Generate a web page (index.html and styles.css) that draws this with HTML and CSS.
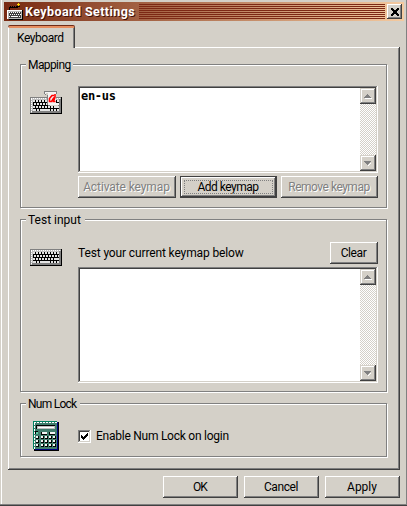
FILE: index.html
```html
<!DOCTYPE html>
<html lang="en">
<head>
<meta charset="utf-8">
<title>Keyboard Settings</title>
<link rel="stylesheet" href="styles.css">
</head>
<body>
<svg class="defs" width="0" height="0" aria-hidden="true">
  <symbol id="keyboard" viewBox="0 0 32 17">
    <path fill="#000" d="M0 16h32v1H0zM31 0h1v17h-1z"/>
    <path fill="#c0c0c0" d="M0 0h31v16H0z"/>
    <path fill="#808080" d="M0 0h31v1H0zM0 0h1v16H0zM29 2h2v14h-2zM2 14h29v2H2z"/>
    <path stroke="#fff" stroke-dasharray="1 1" d="M1 1.5h29M1.5 2v13"/>
    <path fill="#000" d="M3 3h26v11H3z"/>
    <g stroke="#e4e4e4" stroke-width="2" fill="none">
      <path stroke-dasharray="2 1" d="M3 4h26M4 7h25"/>
      <path stroke-dasharray="2 1" d="M6 10h20"/>
      <path d="M3 10h2M26 10h3M3 13h3M7 13h2M10 13h10M21 13h2M24 13h2M27 13h2"/>
    </g>
    <path stroke="#000" d="M3 5.5h26M3 8.5h26M3 11.5h26"/>
  </symbol>
  <symbol id="up" viewBox="0 0 8 5">
    <path fill="#fff" d="M1 4h7v1H1z"/>
    <path fill="#808080" d="M3 0h1v1H3zM2 1h3v1H2zM1 2h5v1H1zM0 3h7v1H0z"/>
  </symbol>
  <symbol id="down" viewBox="0 0 8 5">
    <path fill="#fff" d="M7 1h1v1H6v1H5v1H4v1h1V4h1V3h1V2h1z"/>
    <path fill="#808080" d="M0 0h7v1H0zM1 1h5v1H1zM2 2h3v1H2zM3 3h1v1H3z"/>
  </symbol>
</svg>
<div class="window">
  <div class="titlebar">
    <svg class="title-icon" viewBox="0 0 16 17" width="16" height="17">
      <path stroke="#000" fill="none" d="M2.5 7V4.5h8v-1h2"/>
      <path stroke="#000" stroke-dasharray="1 1" d="M3 3.5h7"/>
      <path stroke="#ffd800" d="M10 1.5h3M11.5 0v3"/>
      <path fill="#000" d="M15 7h1v10H2v-1h13z"/>
      <path fill="#b8b8b8" d="M0 7h15v9H0z"/>
      <path stroke="#fff" d="M0 7.5h15M.5 7v9"/>
      <path fill="#404040" d="M2 9h12v6H2z"/>
      <path stroke="#fff" stroke-dasharray="1 1" d="M2 9.5h12M3 11.5h11"/>
      <path stroke="#fff" d="M2 13.5h1M4 13.5h7M12 13.5h1"/>
    </svg>
    <span class="title">Keyboard Settings</span>
    <span class="stripes"></span>
    <button class="close" aria-label="Close">
      <svg viewBox="0 0 8 8" width="8" height="8"><path fill="#000" d="M0 0h2v1h1v1h2V1h1V0h2v2H7v1H6v2h1v1h1v2H6V7H5V6H3v1H2v1H0V6h1V5h1V3H1V2H0z"/></svg>
    </button>
  </div>
  <div class="tabs"><div class="tab"><span class="t-tab">Keyboard</span></div></div>
  <div class="panel">
    <section class="group mapping">
      <h2><span class="t-map">Mapping</span></h2>
      <div class="row">
        <svg class="map-icon" viewBox="0 0 32 23" width="32" height="23">
          <use href="#keyboard" y="6" width="32" height="17"/>
          <path fill="#808080" d="M14 0h13v3h-1v9h3v3H18v-1h-1V4h-2V3h-1z"/>
          <path fill="#f4f4f4" d="M15 1h11v11h3v2H18V4h-2V3h-1z"/>
          <path fill="#d4d0c8" d="M16 2h2v2h-2zM20 14h8v1h-8z"/>
          <path fill="none" stroke="#f00" stroke-width="1.6" d="M24 4.5h-2l-2.5 3v3h2l2.5-4M25 3v3l-1.5 4.500h2" shape-rendering="auto"/>
        </svg>
        <div class="content">
          <div class="field list"><div class="text t-list">en-us</div>
            <div class="scroll"><i><svg viewBox="0 0 8 5"><use href="#up"/></svg></i><i><svg viewBox="0 0 8 5"><use href="#down"/></svg></i></div>
          </div>
          <div class="buttons">
            <button class="btn activate" disabled><span class="t-act">Activate keymap</span></button>
            <button class="btn default"><span class="t-add">Add keymap</span></button>
            <button class="btn remove" disabled><span class="t-rem">Remove keymap</span></button>
          </div>
        </div>
      </div>
    </section>
    <section class="group test">
      <h2><span class="t-test">Test input</span></h2>
      <div class="row">
        <svg class="test-icon" viewBox="0 0 32 17" width="32" height="17"><use href="#keyboard" width="32" height="17"/></svg>
        <div class="content">
          <div class="prompt"><span class="t-prompt">Test your current keymap below</span><button class="btn clear"><span class="t-clear">Clear</span></button></div>
          <div class="field area"><div class="text"></div>
            <div class="scroll"><i><svg viewBox="0 0 8 5"><use href="#up"/></svg></i><i><svg viewBox="0 0 8 5"><use href="#down"/></svg></i></div>
          </div>
        </div>
      </div>
    </section>
    <section class="group num">
      <h2><span class="t-num">Num Lock</span></h2>
      <div class="row">
        <svg class="calc-icon" viewBox="0 0 26 30" width="26" height="30">
          <path fill="#000" d="M1 1h25v29H1z"/>
          <path fill="#407c6c" d="M0 0h24v28H0z"/>
          <path fill="#000080" d="M24 1h1v28H2v-1h22z"/>
          <path stroke="#008060" d="M0 .5h24M.5 0v28"/>
          <path stroke="#fff" stroke-dasharray="2 1" d="M1 1.5h23M1.5 2v26"/>
          <path fill="#000" d="M3 4h19v1H4v3H3z"/><path fill="#c0c0c0" d="M4 5h18v3H4z"/><path fill="#fff" d="M5 6h16v1H5z"/>
          <path fill="#000" d="M2 10h3v3H2zM8 11h6v3H8zM16 11h6v3h-6z"/>
          <path fill="#60d0a8" d="M3 11h2v2H3z"/><path fill="#f4f4f4" d="M9 11h5v2H9zM17 11h5v2h-5z"/>
          <g stroke-width="3" stroke="#000" stroke-dasharray="3 1"><path d="M3 16.500h3M8 16.500h15M3 20.500h3M8 20.500h15M3 24.500h3M8 24.500h15"/></g>
          <g stroke-width="2" stroke="#f4f4f4" stroke-dasharray="2 2"><path d="M3 16h2M8 16h14M3 20h2M8 20h14M3 24h2M8 24h14"/></g>
        </svg>
        <div class="check">
          <span class="box"><svg viewBox="0 0 7 7" width="7" height="7"><path d="M0 2h1v1h1v1h1V3h1V2h1V1h1V0h1v3H6v1H5v1H4v1H3v1H2V6H1V5H0z"/></svg></span>
          <span class="t-check">Enable Num Lock on login</span>
        </div>
      </div>
    </section>
  </div>
  <div class="actions">
    <button class="btn"><span class="t-ok">OK</span></button>
    <button class="btn"><span class="t-cancel">Cancel</span></button>
    <button class="btn"><span class="t-apply">Apply</span></button>
  </div>
</div>
</body>
</html>
```
FILE: styles.css
```css
* { box-sizing: border-box; }
body { margin: 0; overflow: hidden; background: #d4d0c8; color: #000; font: 12px/14px Roboto, sans-serif; }
.defs { display: block; height: 0; }
svg { shape-rendering: crispEdges; flex: none; display: block; }
span { white-space: nowrap; }

.window { width: 407px; height: 506px; padding: 2px 2px 0 4px; background: #d4d0c8;
  border-bottom: 1px solid #404040; box-shadow: inset -1px -1px #808080, inset 1px 0 #d4d0c8, inset 2px 0 #fff; }
.titlebar { display: flex; align-items: center; width: 400px; height: 19px; padding: 0 2px;
  background: linear-gradient(90deg, #782a12, #f4caa0); }
.title { width: 115px; margin-left: 2px; color: #fff; font-weight: 700; font-size: 12.5px; letter-spacing: .42px; text-shadow: 1px 1px #401008; }
.title-icon { margin-left: 1px; }
.stripes { width: 246px; height: 15px; margin: 0 2px 0 -1px; background: repeating-linear-gradient(#7c2814 0 1px, transparent 1px 2px); }
.close { display: flex; align-items: center; justify-content: center; width: 15px; height: 15px; padding: 0; border: 0; background: #d4d0c8;
  box-shadow: inset -1px -1px #404040, inset 1px 1px #fff, inset -2px -2px #808080; }

.tabs { height: 26px; padding: 5px 0 0 4px; }
.tab { width: 67px; height: 22px; padding: 3px 0 0 8px; background: #d4d0c8; border-left: 1px solid #fff;
  border-top: 2px solid #e68e60; border-right: 1px solid #404040; border-radius: 2px 2px 0 0;
  box-shadow: inset -1px 0 #808080, 0 -1px #702c18; position: relative; z-index: 1; }
.panel { width: 392px; height: 423px; margin-left: 4px; padding: 17px 11px 0 12px;
  box-shadow: inset -1px -1px #404040, inset 1px 1px #fff, inset -2px -2px #808080; }

.group { width: 367px; border: 1px solid #808080; box-shadow: 1px 1px #fff, inset 1px 1px #fff; }
.mapping { height: 144px; }
.test { height: 173px; margin-top: 11px; }
.num { height: 54px; margin-top: 11px; }
h2 { display: block; width: max-content; height: 14px; margin: -7px 0 0 5px; padding: 0 0 0 2px; background: #d4d0c8; font: inherit; }
.mapping h2 { width: 47px; }
.test h2 { width: 59px; }
.num h2 { width: 54px; }
.row { display: flex; padding-left: 9px; }
.content { width: 300px; margin-left: 16px; }
.mapping .content { margin-top: 14px; }
.map-icon { margin-top: 19px; }
.test-icon { margin-top: 22px; }
.test .content { margin-top: 15px; }

.field { display: flex; width: 300px; padding: 2px; background: #fff;
  box-shadow: inset -1px -1px #fff, inset 1px 1px #808080, inset -2px -2px #d4d0c8, inset 2px 2px #404040; }
.list { height: 87px; }
.area { height: 116px; margin-top: 3px; }
.text { width: 280px; padding: 1px 0 0 1px; font: 700 12px/14px "DejaVu Sans Mono", monospace; letter-spacing: -.3px; }
.scroll { display: flex; flex-direction: column; justify-content: space-between; width: 16px;
  background: repeating-conic-gradient(#d4d0c8 0 25%, #fff 0 50%) 0 0 / 2px 2px; }
.scroll i { width: 16px; height: 16px; padding: 6px 0 0 4px; background: #d4d0c8;
  box-shadow: inset -1px -1px #404040, inset 1px 1px #d4d0c8, inset -2px -2px #808080, inset 2px 2px #fff; }
.scroll svg { width: 8px; height: 5px; }

.btn { display: flex; align-items: center; justify-content: center; width: 75px; height: 22px; padding: 0 1px 0 0; border: 0;
  background: #d4d0c8; color: #000; font: inherit;
  box-shadow: inset -1px -1px #404040, inset 1px 1px #fff, inset -2px -2px #808080; }
.btn:disabled { color: #808080; text-shadow: 1px 1px #fff; }
.buttons { display: flex; gap: 4px; margin-top: 3px; }
.activate { width: 98px; }
.remove { width: 97px; }
.default { width: 97px; outline: 1px dotted #808080; outline-offset: -5px;
  box-shadow: inset 0 0 0 1px #404040, inset -2px -2px #404040, inset 2px 2px #fff, inset -3px -3px #808080; }
.prompt { display: flex; justify-content: space-between; align-items: center; height: 22px; }
.clear { width: 48px; }
.calc-icon { margin: 10px 0 0 3px; }
.check { display: flex; align-items: center; height: 14px; margin: 18px 0 0 19px; }
.box { display: flex; width: 13px; height: 13px; padding: 3px; margin-right: 5px; background: #fff;
  box-shadow: inset -1px -1px #fff, inset 1px 1px #808080, inset -2px -2px #d4d0c8, inset 2px 2px #404040; }
.actions { display: flex; gap: 6px; padding: 6px 0 0 159px; }

.t-tab { letter-spacing: -.45px; }
.t-map { letter-spacing: -.6px; }
.t-num { letter-spacing: -.75px; }
.t-act { letter-spacing: -.1px; }
.t-add, .t-rem { letter-spacing: -.5px; }
.t-prompt { letter-spacing: -.13px; }
.t-check { letter-spacing: -.25px; }
.t-clear, .t-cancel { letter-spacing: -.4px; }
.t-ok { letter-spacing: -.8px; }
```
